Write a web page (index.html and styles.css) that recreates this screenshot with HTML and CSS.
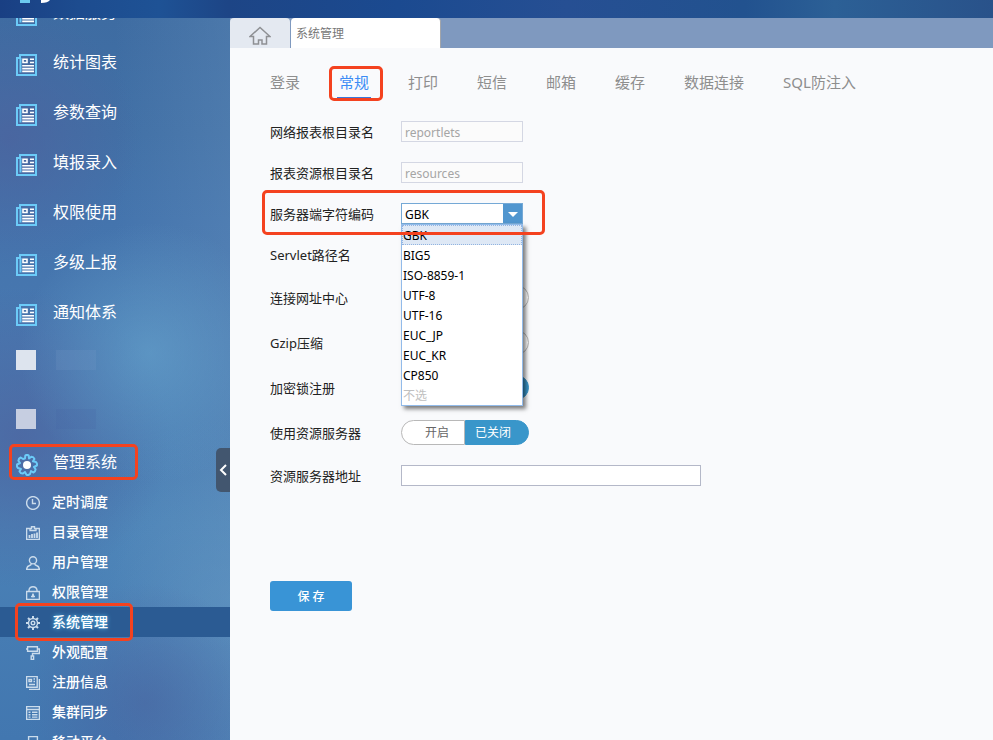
FILE: index.html
```html
<!DOCTYPE html>
<html lang="zh-CN">
<head>
  <meta charset="UTF-8" />
  <title>系统管理</title>
  <meta name="viewport" content="width=device-width, initial-scale=1.0" />
  <link rel="stylesheet" href="styles.css">
</head>
<body>
  <!-- shared icons -->
  <svg class="defs" width="0" height="0" aria-hidden="true">
    <symbol id="i-report" viewBox="0 0 22 22">
      <g fill="none" stroke="#6ccbf8" stroke-width="2">
        <path d="M4 1h16v20H1V4h3z" />
        <path d="M4.500 4v14.500" />
      </g>
      <g fill="none" stroke="#fff" stroke-width="1.600">
        <path d="M7 5.300h4v3.200H7zM14 5.300h4M14 8.500h4M6.200 11.800H18M6.200 14.600H18M6.200 17.400H18" />
      </g>
    </symbol>
  </svg>

  <header class="top">
    <span class="logo">
      <svg width="32" height="4" viewBox="0 0 32 4">
        <path d="M0 0h10v3H0z" fill="#6ccbf0" />
        <path d="M21 0h9q-2 3-9 3z" fill="#fff" />
      </svg>
    </span>
  </header>

  <div class="wrap">
    <aside class="side">
      <ul class="menu">
        <li><a href="#"><svg class="ico"><use href="#i-report" /></svg>数据服务</a></li>
        <li><a href="#"><svg class="ico"><use href="#i-report" /></svg>统计图表</a></li>
        <li><a href="#"><svg class="ico"><use href="#i-report" /></svg>参数查询</a></li>
        <li><a href="#"><svg class="ico"><use href="#i-report" /></svg>填报录入</a></li>
        <li><a href="#"><svg class="ico"><use href="#i-report" /></svg>权限使用</a></li>
        <li><a href="#"><svg class="ico"><use href="#i-report" /></svg>多级上报</a></li>
        <li><a href="#"><svg class="ico"><use href="#i-report" /></svg>通知体系</a></li>
        <li class="hidden-item first"><span class="block"></span><span class="smear"></span></li>
        <li class="hidden-item second"><span class="block"></span><span class="smear"></span></li>
        <li class="mark mark-menu">
          <a href="#">
            <svg class="ico" viewBox="0 0 22 22">
              <g fill="none" stroke="#6ccbf8" stroke-width="2" stroke-linejoin="round">
                <path d="M9 4.5 9.3 1.6Q11 .2 12.7 1.6L13 4.5 15.300 2.800Q17.500 2.700 18.400 4.900L17 7.300 19.900 8Q21.500 9.500 20.900 11.500L18 13 19.600 15.300Q19.400 17.600 17.300 18.500L15 17 14 20Q12.500 21.500 10.500 20.900L9 18 6.700 19.600Q4.400 19.400 3.500 17.300L5 15 2 14Q.5 12.500 1.100 10.500L4 9 2.400 6.700Q2.600 4.400 4.700 3.500L7 5z" />
              </g>
              <circle cx="11" cy="11" r="4" fill="#fff" />
            </svg>管理系统
          </a>
        </li>
      </ul>
      <ul class="submenu">
        <li><a href="#">
          <svg class="sub-ico" viewBox="0 0 14 14"><circle cx="7" cy="7" r="6.400" /><path d="M6.500 3v4.500H10" /></svg>定时调度</a></li>
        <li><a href="#">
          <svg class="sub-ico" viewBox="0 0 14 14"><path d="M4 2.500H.6v10.900h12.800V2.500H10M4 4.500v-2h1.500V.8h3v1.700H10v2z" /><path stroke-width="1.800" d="M3.500 12V9M6 12V8M8.500 12V7.500M11 12V6.500" /></svg>目录管理</a></li>
        <li><a href="#">
          <svg class="sub-ico" viewBox="0 0 14 14"><circle cx="7" cy="4.300" r="3.600" /><path d="M5 7.500Q5.500 9 3.500 9.500.8 10.300.6 13.400h12.800Q13.200 10.300 10.500 9.500 8.500 9 9 7.500" /></svg>用户管理</a></li>
        <li><a href="#">
          <svg class="sub-ico" viewBox="0 0 14 14"><path d="M.6 5.500h12.800v7.900H.6zM3 5.500V4Q3.500.8 7 .8T11 4v1.500M7 7.500v4M5 10.500h4M6 9h2" /></svg>权限管理</a></li>
        <li class="active mark mark-sub"><a href="#">
          <svg class="sub-ico" viewBox="0 0 14 14"><circle cx="7" cy="7" r="4.500" /><circle cx="7" cy="7" r="1.800" /><path stroke-width="2" d="M7 0v2.500M7 11.500V14M0 7h2.500M11.500 7H14M2 2l1.800 1.800M10.200 10.200 12 12M2 12l1.800-1.800M10.200 3.800 12 2" /></svg>系统管理</a></li>
        <li><a href="#">
          <svg class="sub-ico" viewBox="0 0 14 14"><path d="M1.600.8h9.800v4.400H1.600zM0 3h1.600M11.400 3h2v4.500H6.500V10M5.200 10h2.400v3.400H5.200z" /></svg>外观配置</a></li>
        <li><a href="#">
          <svg class="sub-ico" viewBox="0 0 14 14"><path d="M.6.6h10.600v10.600H.6zM13.400 3v10.400H3M3 3.500h2.500v2H3zM7.500 3H9M7.500 5.500H9M3 8.500h6" /></svg>注册信息</a></li>
        <li><a href="#">
          <svg class="sub-ico" viewBox="0 0 14 14"><path d="M.6.6h12.800v12.800H.6zM.6 3.500h12.800M2.500 6.300h2M6 6.300h5.500M2.500 8.700h2M6 8.700h5.500M2.500 11.100h2M6 11.100h5.500" /></svg>集群同步</a></li>
        <li><a href="#">
          <svg class="sub-ico" viewBox="0 0 14 14"><path d="M2.600.6h8.800v12.800H2.600zM5.500 11h3" /></svg>移动平台</a></li>
      </ul>
      <button class="fold" type="button" aria-label="收起">
        <svg width="8" height="12" viewBox="0 0 8 12"><path d="M7 1 2 6l5 5" fill="none" stroke="#fff" stroke-width="2" /></svg>
      </button>
    </aside>

    <main class="main">
      <div class="pages">
        <a class="home" href="#" aria-label="首页">
          <svg width="22" height="19" viewBox="0 0 22 19"><path d="M1 10.500 11 1.500l10 9h-3.500V18H13v-4H9.500v4H4.500v-7.500z" fill="none" stroke="#8e9094" stroke-width="1.500" /></svg>
        </a>
        <a class="page" href="#">系统管理</a>
      </div>

      <div class="content">
        <nav class="tabs">
          <a href="#">登录</a>
          <a href="#" class="current mark mark-tab">常规</a>
          <a href="#">打印</a>
          <a href="#">短信</a>
          <a href="#">邮箱</a>
          <a href="#">缓存</a>
          <a href="#">数据连接</a>
          <a href="#">SQL防注入</a>
        </nav>

        <form>
          <div class="row">
            <label for="reportlets">网络报表根目录名</label>
            <input class="text" id="reportlets" value="reportlets" disabled />
          </div>
          <div class="row">
            <label for="resources">报表资源根目录名</label>
            <input class="text" id="resources" value="resources" disabled />
          </div>
          <div class="row mark mark-row">
            <label for="charset">服务器端字符编码</label>
            <div class="combo">
              <select id="charset">
                <option>GBK</option>
                <option>BIG5</option>
                <option>ISO-8859-1</option>
                <option>UTF-8</option>
                <option>UTF-16</option>
                <option>EUC_JP</option>
                <option>EUC_KR</option>
                <option>CP850</option>
              </select>
              <span class="arrow"></span>
              <ul class="options">
                <li class="selected">GBK</li>
                <li>BIG5</li>
                <li>ISO-8859-1</li>
                <li>UTF-8</li>
                <li>UTF-16</li>
                <li>EUC_JP</li>
                <li>EUC_KR</li>
                <li>CP850</li>
                <li class="none">不选</li>
              </ul>
            </div>
          </div>
          <div class="row">
            <label for="servlet">Servlet路径名</label>
            <input class="text" id="servlet" />
          </div>
          <div class="row tall">
            <label for="center">连接网址中心</label>
            <div class="switch"><input type="checkbox" id="center" checked /><span class="on"></span><span class="off"></span></div>
          </div>
          <div class="row tall">
            <label for="gzip">Gzip压缩</label>
            <div class="switch"><input type="checkbox" id="gzip" checked /><span class="on"></span><span class="off"></span></div>
          </div>
          <div class="row tall">
            <label for="lock">加密锁注册</label>
            <div class="switch"><input type="checkbox" id="lock" /><span class="on"></span><span class="off"></span></div>
          </div>
          <div class="row tall">
            <label for="useServer">使用资源服务器</label>
            <div class="switch"><input type="checkbox" id="useServer" /><span class="on">开启</span><span class="off">已关闭</span></div>
          </div>
          <div class="row">
            <label for="server">资源服务器地址</label>
            <input class="text wide" id="server" />
          </div>
          <button class="save" type="submit">保 存</button>
        </form>
      </div>
    </main>
  </div>
</body>
</html>
```
FILE: styles.css
```css
*, *::before, *::after { box-sizing: border-box; }
body {
  margin: 0;
  height: 100vh;
  display: flex;
  flex-direction: column;
  overflow: hidden;
  font-family: "Noto Sans", "Noto Sans CJK SC", sans-serif;
  font-size: 13px;
}
ul { list-style: none; margin: 0; padding: 0; }
a { color: inherit; text-decoration: none; }
.defs { position: absolute; }

.top {
  flex: none;
  height: 18px;
  padding-left: 20px;
  background: linear-gradient(90deg, #193f83, #1d4c8f 8%, #1e5295 16%, #1d4586 23%, #1b4a90 40%, #264f93 57%, #22528f 75%, #2c6096 84%, #29528a);
}
.logo svg { display: block; }
.wrap { flex: 1; display: flex; min-height: 0; }

/* red frames */
.mark { position: relative; }
.mark::after {
  content: "";
  position: absolute;
  z-index: 5;
  border: 3px solid #f4421f;
  border-radius: 5px;
  pointer-events: none;
}
.mark-menu::after { left: 9px; top: 7px; width: 129px; height: 36px; }
.mark-sub::after { left: 15px; top: -4px; width: 118px; height: 38px; }
.mark-tab::after { left: -10px; right: -14px; top: -1px; bottom: -4px; }
.mark-row::after { left: -8px; top: -3px; width: 283px; height: 45px; }

/* sidebar */
.side {
  position: relative;
  flex: none;
  width: 230px;
  overflow: hidden;
  color: #fff;
  background:
    radial-gradient(circle at 150px 335px, rgba(103, 165, 206, .6), transparent 130px),
    radial-gradient(circle at 145px 685px, rgba(73, 103, 162, .7), transparent 120px),
    radial-gradient(circle at 20px 420px, rgba(78, 98, 158, .7), transparent 150px),
    radial-gradient(circle at 10px 120px, rgba(77, 98, 158, .7), transparent 130px),
    radial-gradient(circle at 230px 580px, rgba(105, 159, 200, .4), transparent 180px),
    linear-gradient(90deg, transparent 50%, rgba(106, 148, 190, .3)),
    linear-gradient(#3e6ca2, #4170a6 16%, #4474ad 28%, #4878b0 45%, #4a81b6 70%, #4277b0);
}
.menu { margin-top: -31px; font-size: 16px; }
.menu li { height: 50px; }
.menu a { display: flex; align-items: center; height: 48px; padding-left: 16px; gap: 15px; }
.ico { flex: none; width: 22px; height: 22px; margin-top: 8px; }
.menu .hidden-item { display: flex; align-items: center; padding-left: 16px; gap: 20px; }
.block { width: 20px; height: 20px; background: #dde4ee; }
.smear { width: 40px; height: 20px; background: rgba(120, 155, 200, .2); }
.first { padding-bottom: 4px; }
.second { padding-top: 14px; }
.second .block { background: #c6cee1; }
.second .smear { background: rgba(70, 100, 165, .2); }

.submenu { font-size: 14px; font-weight: 500; }
.submenu a { display: flex; align-items: center; height: 28px; padding-left: 26px; gap: 12px; }
.submenu li { height: 30px; }
.sub-ico { flex: none; width: 14px; height: 14px; margin-top: 4px; fill: none; stroke: #cbdcec; stroke-width: 1.4; }
.submenu .active { background: #2b5b93; text-shadow: 0 0 4px #5cc4f4; }

.fold {
  position: absolute;
  right: 0;
  top: 430px;
  width: 14px;
  height: 44px;
  padding: 0 0 0 3px;
  border: 0;
  border-radius: 5px 0 0 5px;
  background: #42566f;
}
.fold svg { display: block; }

/* page tabs */
.main { flex: 1; display: flex; flex-direction: column; min-width: 0; }
.pages { display: flex; gap: 1px; height: 30px; background: #7f99bf; }
.home {
  display: flex;
  align-items: center;
  justify-content: center;
  width: 60px;
  padding-top: 4px;
  background: #e4e9f1;
  border-radius: 4px 4px 0 0;
}
.page {
  width: 150px;
  padding-left: 5px;
  line-height: 32px;
  font-size: 12px;
  color: #777;
  background: #fff;
  border-right: 1px solid #a2a5aa;
  border-radius: 4px 4px 0 0;
}
.content { flex: 1; padding: 19px 40px; background: #f9fafc; }

.tabs { display: flex; gap: 39px; height: 30px; margin-bottom: 14px; font-size: 15px; line-height: 30px; color: #8e8e8e; white-space: nowrap; }
.tabs .current { color: #3c8cf5; }
.tabs .current::before {
  content: "";
  position: absolute;
  left: -2px;
  right: -2px;
  bottom: -1px;
  height: 1px;
  background: #3c78d8;
}

/* form */
.row { display: flex; align-items: center; height: 41px; }
.row.tall { height: 45px; }
.row label { width: 131px; color: #222; }
.text {
  width: 122px;
  height: 21px;
  padding: 2px 3px 0;
  border: 1px solid #b4b8c8;
  background: #fff;
  font: inherit;
  font-size: 12px;
}
.text:disabled { color: #a5a5a5; background: #fbfbfb; border-color: #d4d7e3; }
.text.wide { width: 300px; }

.combo { position: relative; width: 122px; height: 21px; }
.combo select {
  display: block;
  width: 100%;
  height: 21px;
  padding: 2px 3px 0;
  appearance: none;
  border: 1px solid #75a9d6;
  border-radius: 0;
  background: #fff;
  color: #000;
  font: inherit;
  font-size: 12px;
}
.arrow { position: absolute; right: 1px; top: 1px; width: 19px; height: 19px; background: #5196cf; pointer-events: none; }
.arrow::after {
  content: "";
  position: absolute;
  left: 5px;
  top: 8px;
  border: 5px solid transparent;
  border-top-color: #fff;
  border-bottom: 0;
}
.options {
  position: absolute;
  z-index: 2;
  left: 0;
  top: 21px;
  width: 100%;
  border: 1px solid #92bbea;
  background: #fff;
  box-shadow: 3px 3px 4px rgba(0, 0, 0, .5);
  font-size: 12px;
  line-height: 22px;
  color: #000;
}
.options li { height: 20px; padding-left: 1px; }
.options .selected { background: #dee8f5; outline: 1px dotted #92b4e0; outline-offset: -1px; }
.options .none { color: #c0c0c0; }

.switch { position: relative; display: flex; width: 128px; height: 25px; font-size: 12px; line-height: 23px; text-align: center; }
.switch input { position: absolute; inset: 0; width: 100%; height: 100%; margin: 0; opacity: 0; }
.switch span { width: 64px; border: 1px solid #b8b8b8; background: #fff; color: #666; }
.switch .on { border-radius: 13px 0 0 13px; padding-left: 8px; }
.switch .off { border-radius: 0 13px 13px 0; padding-right: 8px; }
.switch input:checked ~ .on,
.switch input:not(:checked) ~ .off { background: #3996ca; border-color: #3996ca; color: #fff; }

.save {
  display: block;
  width: 82px;
  height: 30px;
  margin-top: 85px;
  border: 0;
  border-radius: 3px;
  background: #3994d6;
  color: #fff;
  font: inherit;
  font-size: 12px;
  font-weight: 500;
}
```
